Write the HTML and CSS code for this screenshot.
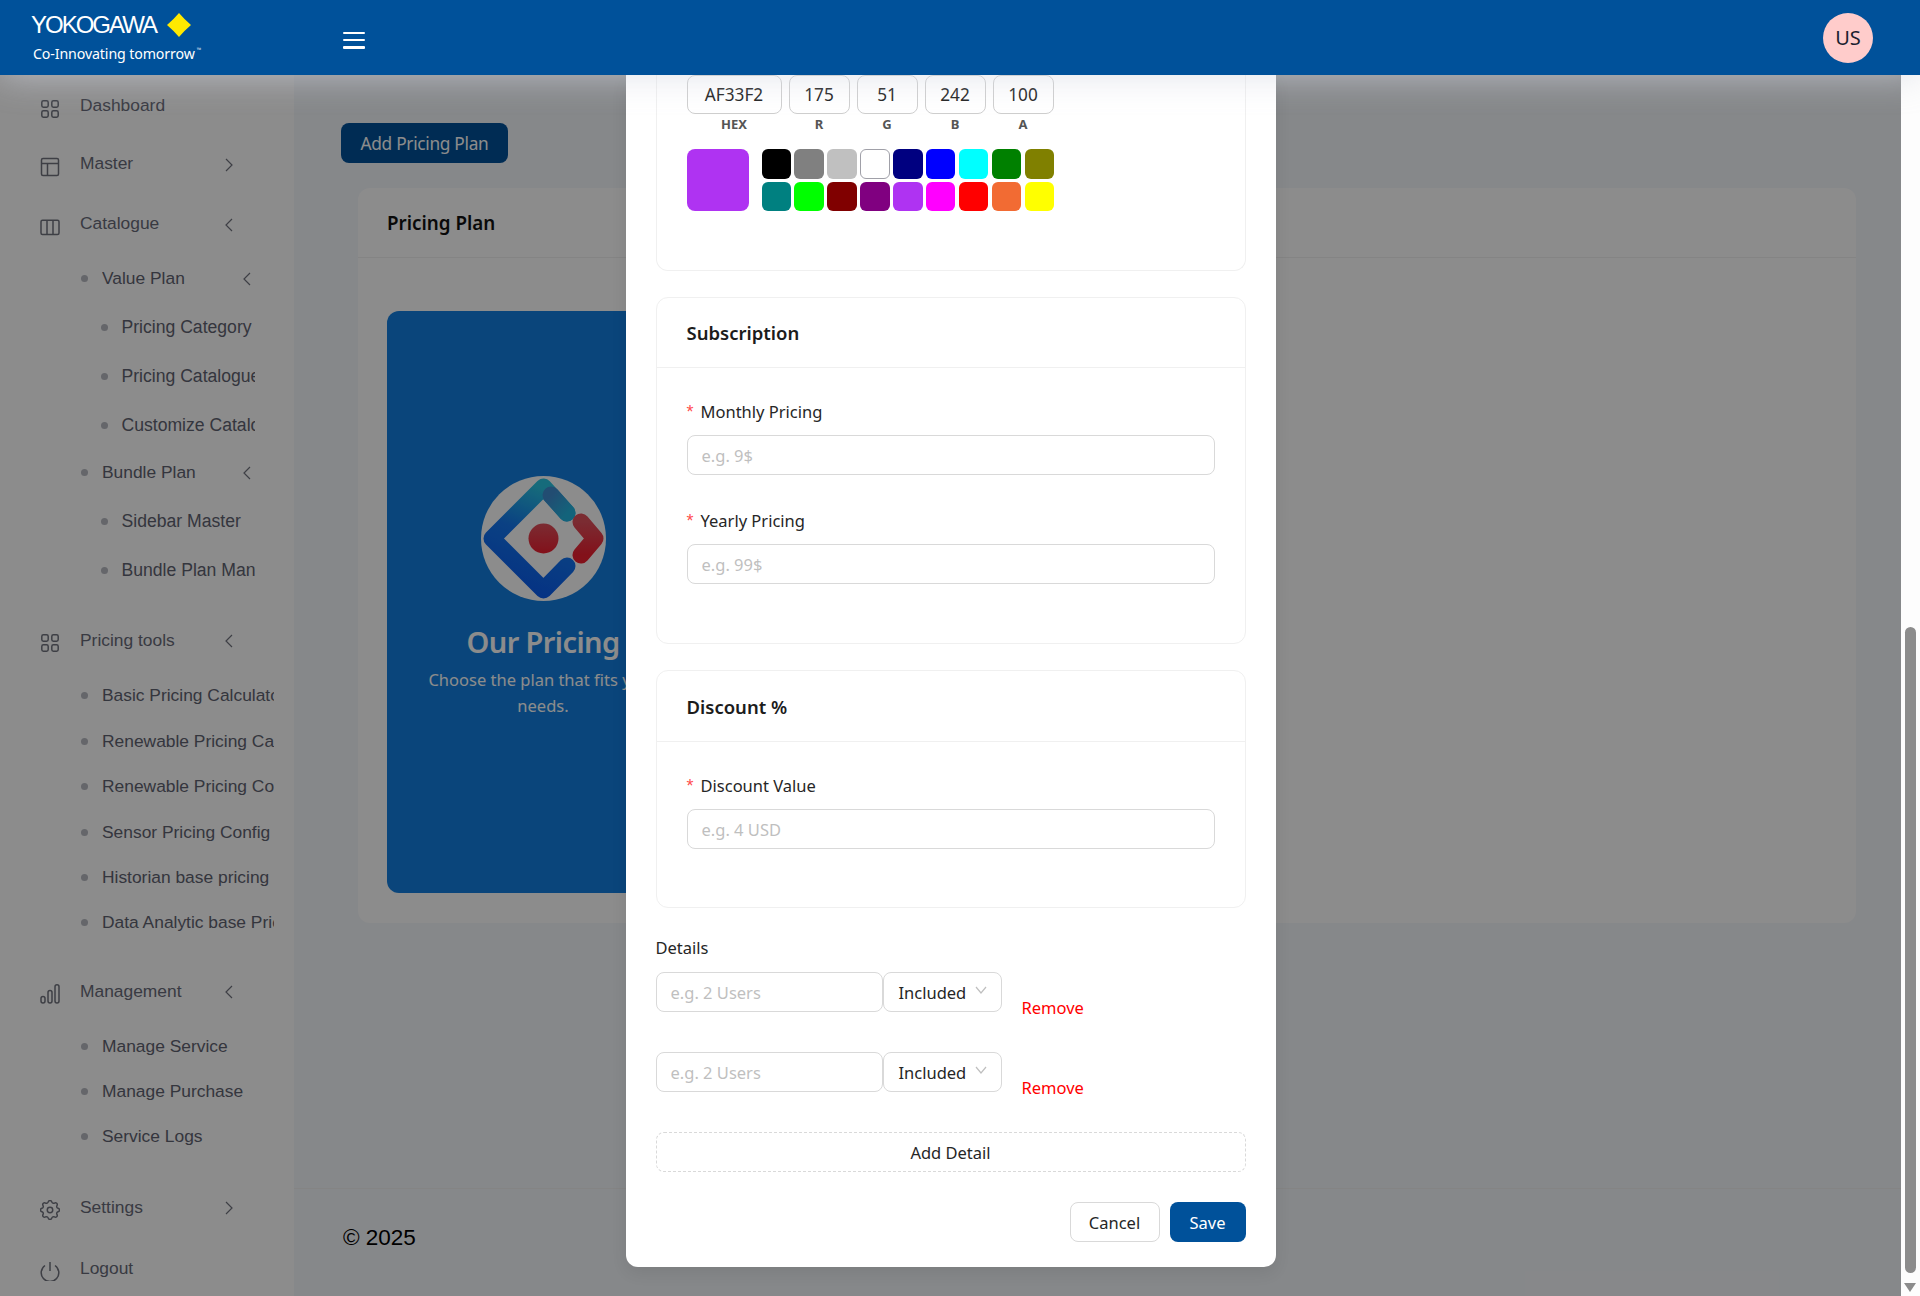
FILE: index.html
```html
<!DOCTYPE html>
<html lang="en">
<head>
<meta charset="utf-8">
<title>Pricing Plan</title>
<link rel="stylesheet" href="styles.css">
</head>
<body>
<div class="app">
  <header class="topbar">
    <div class="brand">
      <div class="brand-top">
        <span class="brand-name">YOKOGAWA</span>
        <svg class="brand-diamond" viewBox="0 0 24 24"><path d="M12 0 Q17.5 6.5 24 12 Q17.5 17.5 12 24 Q6.5 17.5 0 12 Q6.5 6.5 12 0Z" fill="#ffe900"/></svg>
      </div>
      <div class="brand-tag">Co-Innovating tomorrow<span class="tm">™</span></div>
    </div>
    <button class="burger" aria-label="Menu"><span></span><span></span><span></span></button>
    <div class="avatar">US</div>
  </header>

  <div class="below">
    <nav class="sidebar">
      <a class="top first"><svg class="ico" viewBox="0 0 20 20"><rect x="1.8" y="1.8" width="6.4" height="6.4" rx="1.6"/><rect x="11.8" y="1.8" width="6.4" height="6.4" rx="1.6"/><rect x="1.8" y="11.8" width="6.4" height="6.4" rx="1.6"/><rect x="11.8" y="11.8" width="6.4" height="6.4" rx="1.6"/></svg><span class="lbl">Dashboard</span></a>
      <a class="top"><svg class="ico" viewBox="0 0 20 20"><rect x="1.5" y="1.5" width="17" height="17" rx="1.5"/><path d="M1.5 6.5h17M7.5 6.5v12"/></svg><span class="lbl">Master</span><svg class="chev" viewBox="0 0 8 14"><path d="M1 1l6 6-6 6"/></svg></a>
      <a class="top gap2"><svg class="ico" viewBox="0 0 20 20"><rect x="1" y="3.2" width="18" height="14.2" rx="1.5"/><path d="M7 3.2v14.2M13 3.2v14.2"/></svg><span class="lbl">Catalogue</span><svg class="chev" viewBox="0 0 8 14"><path d="M7 1L1 7l6 6"/></svg></a>

      <a class="nest lv2 gap1"><i class="dot"></i><span class="lbl">Value Plan</span><svg class="chev" viewBox="0 0 8 14"><path d="M7 1L1 7l6 6"/></svg></a>
      <a class="nest lv3"><i class="dot"></i><span class="lbl">Pricing Category</span></a>
      <a class="nest lv3"><i class="dot"></i><span class="lbl">Pricing Catalogue</span></a>
      <a class="nest lv3"><i class="dot"></i><span class="lbl">Customize Catalogue</span></a>
      <a class="nest lv2 short"><i class="dot"></i><span class="lbl">Bundle Plan</span><svg class="chev" viewBox="0 0 8 14"><path d="M7 1L1 7l6 6"/></svg></a>
      <a class="nest lv3"><i class="dot"></i><span class="lbl">Sidebar Master</span></a>
      <a class="nest lv3"><i class="dot"></i><span class="lbl">Bundle Plan Management</span></a>

      <a class="top group"><svg class="ico" viewBox="0 0 20 20"><rect x="1.8" y="1.8" width="6.4" height="6.4" rx="1.6"/><rect x="11.8" y="1.8" width="6.4" height="6.4" rx="1.6"/><rect x="1.8" y="11.8" width="6.4" height="6.4" rx="1.6"/><rect x="11.8" y="11.8" width="6.4" height="6.4" rx="1.6"/></svg><span class="lbl">Pricing tools</span><svg class="chev" viewBox="0 0 8 14"><path d="M7 1L1 7l6 6"/></svg></a>
      <a class="sub lv2 gap3"><i class="dot"></i><span class="lbl">Basic Pricing Calculator</span></a>
      <a class="sub lv2"><i class="dot"></i><span class="lbl">Renewable Pricing Calculator</span></a>
      <a class="sub lv2"><i class="dot"></i><span class="lbl">Renewable Pricing Config</span></a>
      <a class="sub lv2"><i class="dot"></i><span class="lbl">Sensor Pricing Config</span></a>
      <a class="sub lv2"><i class="dot"></i><span class="lbl">Historian base pricing</span></a>
      <a class="sub lv2"><i class="dot"></i><span class="lbl">Data Analytic base Pricing</span></a>

      <a class="top group"><svg class="ico" viewBox="0 0 20 20"><rect x="1" y="12.5" width="4" height="6.5" rx="2"/><rect x="8" y="6.5" width="4" height="12.5" rx="2"/><rect x="15" y="0.8" width="4" height="18.2" rx="2"/></svg><span class="lbl">Management</span><svg class="chev" viewBox="0 0 8 14"><path d="M7 1L1 7l6 6"/></svg></a>
      <a class="sub lv2 gap4"><i class="dot"></i><span class="lbl">Manage Service</span></a>
      <a class="sub lv2"><i class="dot"></i><span class="lbl">Manage Purchase</span></a>
      <a class="sub lv2"><i class="dot"></i><span class="lbl">Service Logs</span></a>

      <a class="top group-last"><svg class="ico gear" viewBox="2.5 2.5 19 19"><path d="M10.325 4.317c.426-1.756 2.924-1.756 3.35 0a1.724 1.724 0 0 0 2.573 1.066c1.543-.94 3.31.826 2.37 2.37a1.724 1.724 0 0 0 1.065 2.572c1.756.426 1.756 2.924 0 3.35a1.724 1.724 0 0 0-1.066 2.573c.94 1.543-.826 3.31-2.37 2.37a1.724 1.724 0 0 0-2.572 1.065c-.426 1.756-2.924 1.756-3.35 0a1.724 1.724 0 0 0-2.573-1.066c-1.543.94-3.31-.826-2.37-2.37a1.724 1.724 0 0 0-1.065-2.572c-1.756-.426-1.756-2.924 0-3.35a1.724 1.724 0 0 0 1.066-2.573c-.94-1.543.826-3.31 2.37-2.37c1 .608 2.296.07 2.572-1.065z"/><circle cx="12" cy="12" r="2.6"/></svg><span class="lbl">Settings</span><svg class="chev" viewBox="0 0 8 14"><path d="M1 1l6 6-6 6"/></svg></a>
      <a class="top gap2b"><svg class="ico" viewBox="0 0 20 20"><path d="M10 1v9"/><path d="M5 4.5a8.8 8.8 0 1 0 10 0"/></svg><span class="lbl">Logout</span></a>
    </nav>

    <main class="main">
      <div class="content">
        <button class="add-btn">Add Pricing Plan</button>
        <section class="plan-card">
          <div class="plan-head">Pricing Plan</div>
          <div class="plan-body">
            <div class="promo">
              <svg class="promo-logo" viewBox="0 0 125 125">
                <defs>
                  <linearGradient id="g1" x1="0.65" y1="0" x2="0.35" y2="1"><stop offset="0" stop-color="#29c4e0"/><stop offset="0.45" stop-color="#1477ee"/><stop offset="1" stop-color="#0a5cf0"/></linearGradient>
                  <linearGradient id="g2" x1="0" y1="0" x2="1" y2="1"><stop offset="0" stop-color="#3f8cd0"/><stop offset="1" stop-color="#24b4e0"/></linearGradient>
                  <linearGradient id="g3" x1="0" y1="0" x2="0" y2="1"><stop offset="0" stop-color="#e0505c"/><stop offset="1" stop-color="#ee1f30"/></linearGradient>
                </defs>
                <circle cx="62.5" cy="62.5" r="62.5" fill="#fff"/>
                <path d="M86 37 L62.5 11 L11 62.5 L62.5 114 L86 90" fill="none" stroke="url(#g1)" stroke-width="17" stroke-linecap="round" stroke-linejoin="round"/>
                <path d="M70 19 L86 37" fill="none" stroke="url(#g2)" stroke-width="17" stroke-linecap="round"/>
                <path d="M100 46 L114 62.5 L100 79" fill="none" stroke="url(#g3)" stroke-width="17" stroke-linecap="round" stroke-linejoin="round"/>
                <circle cx="62.5" cy="62.5" r="15" fill="url(#g3)"/>
              </svg>
              <h2 class="promo-title">Our Pricing</h2>
              <p class="promo-text">Choose the plan that fits your needs.</p>
            </div>
          </div>
        </section>
      </div>
      <footer class="foot">© 2025</footer>
    </main>
  </div>

  <div class="mask"></div>

  <div class="modal-wrap">
    <div class="modal">
      <section class="box box-color">
        <div class="picker-inputs">
          <div class="pi pi-hex"><span class="pi-val">AF33F2</span><span class="pi-lab">HEX</span></div>
          <div class="pi"><span class="pi-val">175</span><span class="pi-lab">R</span></div>
          <div class="pi"><span class="pi-val">51</span><span class="pi-lab">G</span></div>
          <div class="pi"><span class="pi-val">242</span><span class="pi-lab">B</span></div>
          <div class="pi"><span class="pi-val">100</span><span class="pi-lab">A</span></div>
        </div>
        <div class="swatches">
          <div class="swatch-big"></div>
          <div class="swatch-grid">
            <i class="c-000"></i><i class="c-808"></i><i class="c-c0c"></i><i class="c-fff"></i><i class="c-navy"></i><i class="c-blue"></i><i class="c-cyan"></i><i class="c-green"></i><i class="c-olive"></i>
            <i class="c-teal"></i><i class="c-lime"></i><i class="c-maroon"></i><i class="c-purple"></i><i class="c-violet"></i><i class="c-magenta"></i><i class="c-red"></i><i class="c-orange"></i><i class="c-yellow"></i>
          </div>
        </div>
      </section>

      <section class="box box-sub">
        <h3 class="box-head">Subscription</h3>
        <div class="box-body">
          <label class="fld-label"><span class="req">*</span>Monthly Pricing</label>
          <input class="inp" placeholder="e.g. 9$">
          <label class="fld-label second"><span class="req">*</span>Yearly Pricing</label>
          <input class="inp" placeholder="e.g. 99$">
        </div>
      </section>

      <section class="box box-disc">
        <h3 class="box-head">Discount %</h3>
        <div class="box-body">
          <label class="fld-label"><span class="req">*</span>Discount Value</label>
          <input class="inp" placeholder="e.g. 4 USD">
        </div>
      </section>

      <div class="details-label">Details</div>
      <div class="detail-row">
        <input class="inp inp-detail" placeholder="e.g. 2 Users">
        <div class="sel"><span>Included</span><svg class="sel-chev" viewBox="0 0 12 8"><path d="M1 1l5 6 5-6"/></svg></div>
        <a class="remove">Remove</a>
      </div>
      <div class="detail-row">
        <input class="inp inp-detail" placeholder="e.g. 2 Users">
        <div class="sel"><span>Included</span><svg class="sel-chev" viewBox="0 0 12 8"><path d="M1 1l5 6 5-6"/></svg></div>
        <a class="remove">Remove</a>
      </div>
      <button class="add-detail">Add Detail</button>
      <div class="actions">
        <button class="btn-cancel">Cancel</button>
        <button class="btn-save">Save</button>
      </div>
    </div>
  </div>

  <div class="vscroll">
    <div class="vthumb"></div>
    <div class="varrow"></div>
  </div>
</div>
</body>
</html>
```

FILE: styles.css
```css
* { box-sizing: border-box; }
html, body { margin: 0; height: 100%; overflow: hidden; }
body { font-family: "Noto Sans", "Open Sans", sans-serif; font-size: 16.5px; color: #1f1f1f; background: #f5f7fc; }
button { font-family: inherit; cursor: pointer; }

.app { position: relative; width: 1920px; height: 1296px; overflow: hidden; display: flex; flex-direction: column; }

/* top bar */
.topbar { position: relative; z-index: 30; flex: none; height: 75px; background: #00519a; display: flex; align-items: center; padding-left: 31px; padding-right: 47px; box-shadow: 0 0 36px rgba(211, 213, 225, .7); }
.brand { width: 312px; color: #fff; display: flex; flex-direction: column; align-self: flex-start; padding-top: 12px; }
.brand-top { display: flex; align-items: center; height: 25px; }
.brand-name { font-family: "Liberation Sans", Arial, sans-serif; font-size: 24px; letter-spacing: -2px; width: 136px; line-height: 25px; }
.brand-diamond { width: 24px; height: 24px; }
.brand-tag { font-size: 14.2px; line-height: 20px; margin-top: 3px; margin-left: 2px; letter-spacing: -.12px; white-space: nowrap; }
.tm { font-size: 6px; vertical-align: 7px; margin-left: 2px; opacity: .8; }
.burger { width: 22px; height: 17px; padding: 0; border: 0; background: none; display: flex; flex-direction: column; justify-content: space-between; margin-top: 5px; }
.burger span { display: block; height: 2.5px; width: 100%; background: #fff; border-radius: 1px; }
.avatar { margin-left: auto; width: 50px; height: 50px; border-radius: 50%; background: #ffcccb; color: #1b2230; display: flex; align-items: center; justify-content: center; font-size: 20px; }

/* layout below bar */
.below { flex: 1; display: flex; min-height: 0; }
.sidebar { flex: none; width: 294px; background: #fff; overflow: hidden; font-family: "Liberation Sans", Arial, sans-serif; font-size: 17.4px; color: #686b79; display: flex; flex-direction: column; padding-top: 1.5px; }
.sidebar a { display: flex; align-items: center; flex: none; }
.lbl { white-space: nowrap; overflow: hidden; }
.top { height: 58px; padding-left: 40px; }
.top .lbl { width: 145px; }
.ico { width: 20px; height: 20px; margin-right: 20px; margin-top: 6px; fill: none; stroke: #71747f; stroke-width: 1.5; flex: none; }
.gear { stroke-width: 1.4; }
.chev { width: 8px; height: 14px; fill: none; stroke: #71747f; stroke-width: 1.2; flex: none; margin-top: 2px; }
.gap2 { margin-top: 2px; }
.gap2b { margin-top: 3px; }
.gap1 { margin-top: 1px; }
.gap3 { margin-top: 4px; }
.gap4 { margin-top: 3px; }
.group { margin-top: 16.8px; }
.group-last { margin-top: 18.5px; }
.nest { height: 49px; color: #5f6371; }
.sub { height: 45.4px; color: #5f6371; }
.short { height: 43px; margin-top: 1px; margin-bottom: 3px; }
.dot { width: 7px; height: 7px; border-radius: 50%; background: #b8bac2; flex: none; }
.lv2 { padding-left: 81px; }
.lv2 .dot { margin-right: 14px; }
.lv2 .lbl { width: 172px; }
.nest.lv2 .lbl { width: 141px; }
.lv3 { padding-left: 101px; font-size: 17.6px; }
.lv3 .dot { margin-right: 13.5px; }
.lv3 .lbl { width: 133px; }

/* main */
.main { flex: 1; min-width: 0; display: flex; flex-direction: column; background: #f5f7fc; }
.content { flex: 1; padding: 48px 0 0 47px; }
.add-btn { display: block; height: 40px; width: 167px; background: #00519a; color: #fff; border: 0; border-radius: 8px; font-size: 17.3px; letter-spacing: -.3px; }
.plan-card { margin: 25px 0 0 17px; width: 1498px; height: 735px; background: #fff; border-radius: 12px; }
.plan-head { height: 70px; padding-left: 29px; display: flex; align-items: center; font-size: 18.8px; font-weight: 600; color: #111; border-bottom: 1px solid #f0f0f0; }
.plan-body { padding: 53px 29px 0; }
.promo { width: 312px; height: 582px; background: #137fe0; border-radius: 12px; color: #fff; text-align: center; padding: 165px 20px 0; }
.promo-logo { display: block; width: 125px; height: 125px; margin: 0 auto; }
.promo-title { margin: 20px 0 0; font-size: 29px; letter-spacing: -.6px; line-height: 42px; font-weight: 600; }
.promo-text { margin: 4px 0 0; font-size: 16.5px; line-height: 26px; }
.foot { flex: none; height: 108px; border-top: 1px solid #f0f0f0; padding: 34px 0 0 49px; font-family: "Liberation Sans", Arial, sans-serif; font-size: 22.5px; line-height: 30px; color: #000; }

/* mask and modal */
.mask { position: absolute; inset: 0; z-index: 10; background: rgba(0, 0, 0, .45); }
.modal-wrap { position: absolute; z-index: 20; top: 75px; left: 0; right: 19px; bottom: 0; overflow: hidden; display: flex; flex-direction: column; align-items: center; justify-content: flex-end; padding-bottom: 29px; }
.modal { flex: none; width: 650px; background: #fff; border-radius: 0 0 12px 12px; padding: 0 30px 25px; box-shadow: 0 6px 16px rgba(0, 0, 0, .08); }
.box { border: 1px solid #f0f0f0; border-radius: 12px; background: #fff; }
.box-color { border-top: 0; border-radius: 0 0 12px 12px; height: 196px; padding: 0 30px; margin-bottom: 26px; }
.box-sub { height: 347px; margin-bottom: 26px; }
.box-disc { height: 238px; margin-bottom: 27px; }
.box-head { margin: 0; height: 70px; padding: 0 30px; display: flex; align-items: center; font-size: 18.5px; font-weight: 600; color: #1c1c1c; border-bottom: 1px solid #f0f0f0; }
.box-disc .box-head { height: 71px; }
.box-body { padding: 31px 30px 0; }
.fld-label { display: block; height: 26px; line-height: 26px; color: #262626; }
.second { margin-top: 33px; }
.req { color: #ff4d4f; margin-right: 7px; font-family: "Liberation Sans", Arial, sans-serif; font-size: 18px; line-height: 1; }
.inp { display: block; width: 100%; height: 40px; margin-top: 10px; padding: 0 14px; border: 1px solid #d9d9d9; border-radius: 8px; font: inherit; color: #1f1f1f; outline: 0; background: #fff; }
.inp::placeholder { color: #bfbfbf; }

.picker-inputs { display: flex; gap: 7px; }
.pi { width: 61px; display: flex; flex-direction: column; align-items: center; }
.pi-hex { width: 95px; }
.pi-val { width: 100%; height: 39px; border: 1px solid #cfcfcf; border-radius: 8px; display: flex; align-items: center; justify-content: center; font-size: 17.2px; color: #222; }
.pi-lab { font-size: 13px; font-weight: 700; color: #555; line-height: 20px; }
.swatches { display: flex; margin-top: 15px; }
.swatch-big { width: 62px; height: 62px; background: #af33f2; border-radius: 8px; margin-right: 13px; }
.swatch-grid { display: grid; grid-template-columns: repeat(9, 29.5px); grid-auto-rows: 29.5px; gap: 3.4px; }
.swatch-grid i { border-radius: 6px; display: block; }
.c-000 { background: #000; } .c-808 { background: #808080; } .c-c0c { background: #c0c0c0; }
.c-fff { background: #fff; border: 1px solid #a0a0a8; } .c-navy { background: #000080; } .c-blue { background: #0000ff; }
.c-cyan { background: #00ffff; } .c-green { background: #008000; } .c-olive { background: #808000; }
.c-teal { background: #008080; } .c-lime { background: #00ff00; } .c-maroon { background: #800000; }
.c-purple { background: #800080; } .c-violet { background: #af33f2; } .c-magenta { background: #ff00ff; }
.c-red { background: #ff0000; } .c-orange { background: #f26b33; } .c-yellow { background: #ffff00; }

.details-label { height: 26px; line-height: 26px; color: #262626; }
.detail-row { display: flex; height: 40px; margin-top: 11px; margin-bottom: 40px; }
.detail-row + .detail-row { margin-top: 0; }
.inp-detail { width: 227px; margin: 0; flex: none; }
.sel { width: 119px; height: 40px; flex: none; border: 1px solid #d9d9d9; border-radius: 8px; padding: 0 14px 0 15px; display: flex; align-items: center; justify-content: space-between; color: #262626; }
.sel-chev { width: 12px; height: 8px; fill: none; stroke: #bfbfbf; stroke-width: 1.2; margin-top: -4px; }
.remove { margin-left: 20px; color: #ff0000; line-height: 26px; height: 26px; margin-top: 23px; }
.add-detail { display: block; width: 100%; height: 40px; background: #fff; border: 1px dashed #d9d9d9; border-radius: 8px; font-size: 16.5px; color: #262626; }
.actions { display: flex; justify-content: flex-end; gap: 10px; margin-top: 30px; }
.btn-cancel { width: 90px; height: 40px; background: #fff; border: 1px solid #d9d9d9; border-radius: 8px; font-size: 16.5px; color: #262626; }
.btn-save { width: 76px; height: 40px; background: #00519a; border: 0; border-radius: 8px; font-size: 16.5px; color: #fff; }

/* modal scrollbar */
.vscroll { position: absolute; z-index: 20; top: 75px; right: 0; bottom: 0; width: 19px; background: #fdfdfd; }
.vthumb { position: absolute; left: 4px; top: 552px; width: 11px; height: 646px; border-radius: 6px; background: #8c8c8c; }
.varrow { position: absolute; left: 3px; bottom: 4px; width: 0; height: 0; border-left: 6.5px solid transparent; border-right: 6.5px solid transparent; border-top: 9px solid #8c8c8c; }
```
